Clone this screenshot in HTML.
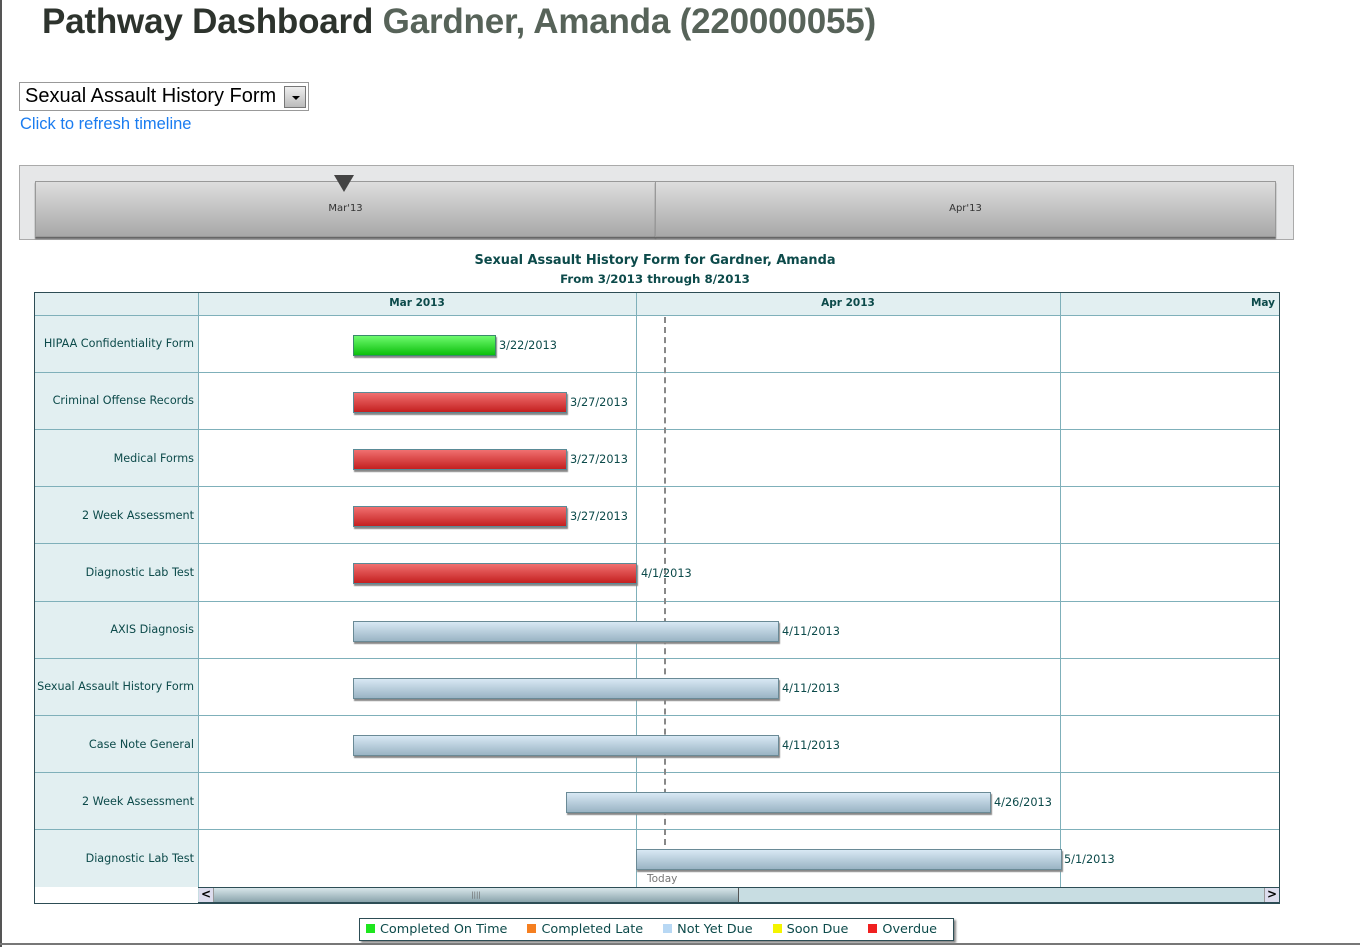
<!DOCTYPE html>
<html><head><meta charset="utf-8"><style>
*{margin:0;padding:0;box-sizing:border-box}
body{width:1360px;height:947px;background:#fff;position:relative;overflow:hidden;font-family:"Liberation Sans",sans-serif}
.a{position:absolute}
h1{position:absolute;left:42px;top:2px;font-size:35px;font-weight:bold;color:#2d332d;white-space:nowrap;letter-spacing:-0.2px}
h1 span{color:#576359}
.sel{left:19px;top:82px;width:290px;height:29px;border:1px solid #999;font-size:20px;padding:2px 0 0 5px;color:#000}
.sel .btn{position:absolute;right:2px;top:3px;width:22px;height:22px;border:1px solid #777;background:linear-gradient(#eee,#bbb)}
.sel .btn:after{content:"";position:absolute;left:7px;top:9px;border:4px solid transparent;border-top:4px solid #000}
.link{left:20px;top:115px;font-size:16.5px;color:#1a7cf0}
.tl{left:19px;top:165px;width:1275px;height:75px;background:#e6e7e8;border:1px solid #aaa}
.seg{top:15px;height:56px;background:linear-gradient(#dedede,#a8a8a8);border:1px solid #999;box-shadow:0 2px 1px #666;font-size:10px;font-family:"DejaVu Sans",sans-serif;color:#333;text-align:center;padding-top:21px}
.ct{width:1310px;text-align:center;font-weight:bold;color:#0c4a4a;font-size:12.9px;font-family:"DejaVu Sans",sans-serif}
.grid{left:34px;top:292px;width:1246px;height:612px;border:1px solid #2d4d55;font-family:"DejaVu Sans",sans-serif}
.cell{position:absolute;font-size:10.5px;color:#0c4a4a}
.hl{background:#e2eff1}
.vl{position:absolute;top:0;width:1px;background:#7fb0ba}
.hr{position:absolute;left:0;height:1px;background:#7fb0ba}
.bar{position:absolute;height:21px;border:1px solid #6a8a96;box-shadow:1px 2px 1px #888}
.g{background:linear-gradient(#6efa6e,#0cbf0c);border-color:#3a8a6a}
.r{background:linear-gradient(#f07070,#c42020);border-color:#5a8a96}
.b{background:linear-gradient(#d8e8f4,#9ab4c4)}
.d{position:absolute;font-size:11.3px;color:#0c4a4a}
.lab{position:absolute;right:0;width:163px;text-align:right;padding-right:4px;font-size:11.2px;color:#0c4a4a;white-space:nowrap}
.leg{left:359px;top:918px;width:595px;height:23px;border:1px solid #2d4d55;box-shadow:2px 2px 2px #888;font-size:12.8px;font-family:"DejaVu Sans",sans-serif;color:#0c4a4a;padding:3px 0 0 6px;white-space:nowrap}
.leg i{display:inline-block;width:9px;height:9px;margin-right:5px}
.leg b{font-weight:normal;margin-right:20px}
</style></head><body>
<div class="a" style="left:0;top:0;width:2px;height:947px;background:#555"></div>
<div class="a" style="left:0;top:943px;width:1360px;height:2px;background:#777"></div>
<h1>Pathway Dashboard <span>Gardner, Amanda (220000055)</span></h1>
<div class="a sel">Sexual Assault History Form<div class="btn"></div></div>
<div class="a link">Click to refresh timeline</div>
<div class="a tl">
<div class="a seg" style="left:15px;width:621px">Mar'13</div>
<div class="a seg" style="left:635px;width:621px">Apr'13</div>
<div class="a" style="left:314px;top:9px;border:10px solid transparent;border-top:17px solid #444;border-bottom:0"></div>
</div>
<div class="a ct" style="top:253px">Sexual Assault History Form for Gardner, Amanda</div>
<div class="a ct" style="top:272px;font-size:11.8px">From 3/2013 through 8/2013</div>
<div class="a grid">
<div class="a hl" style="left:0;top:0;width:1244px;height:23px"></div>
<div class="a hl" style="left:0;top:23px;width:163px;height:571px"></div>
<div class="cell" style="left:163px;top:4px;width:438px;text-align:center;font-weight:bold">Mar 2013</div>
<div class="cell" style="left:601px;top:4px;width:424px;text-align:center;font-weight:bold">Apr 2013</div>
<div class="cell" style="left:1180px;top:4px;width:60px;text-align:right;font-weight:bold">May</div>
<div class="vl" style="left:163px;height:594px"></div>
<div class="vl" style="left:601px;height:594px"></div>
<div class="vl" style="left:1025px;height:594px"></div>
<div class="hr" style="top:22px;width:1244px"></div>
<div class="hr" style="top:79px;width:1244px"></div>
<div class="hr" style="top:136px;width:1244px"></div>
<div class="hr" style="top:193px;width:1244px"></div>
<div class="hr" style="top:250px;width:1244px"></div>
<div class="hr" style="top:308px;width:1244px"></div>
<div class="hr" style="top:365px;width:1244px"></div>
<div class="hr" style="top:422px;width:1244px"></div>
<div class="hr" style="top:479px;width:1244px"></div>
<div class="hr" style="top:536px;width:1244px"></div>
<div class="a" style="left:629px;top:24px;height:528px;border-left:2px dashed #888"></div>
<div class="cell" style="left:612px;top:580px;color:#777">Today</div>
<div class="lab" style="left:0;top:44px">HIPAA Confidentiality Form</div>
<div class="lab" style="left:0;top:101px">Criminal Offense Records</div>
<div class="lab" style="left:0;top:159px">Medical Forms</div>
<div class="lab" style="left:0;top:216px">2 Week Assessment</div>
<div class="lab" style="left:0;top:273px">Diagnostic Lab Test</div>
<div class="lab" style="left:0;top:330px">AXIS Diagnosis</div>
<div class="lab" style="left:0;top:387px">Sexual Assault History Form</div>
<div class="lab" style="left:0;top:445px">Case Note General</div>
<div class="lab" style="left:0;top:502px">2 Week Assessment</div>
<div class="lab" style="left:0;top:559px">Diagnostic Lab Test</div>
<div class="bar g" style="left:318px;top:42px;width:143px"></div><div class="d" style="left:464px;top:46px">3/22/2013</div>
<div class="bar r" style="left:318px;top:99px;width:214px"></div><div class="d" style="left:535px;top:103px">3/27/2013</div>
<div class="bar r" style="left:318px;top:156px;width:214px"></div><div class="d" style="left:535px;top:160px">3/27/2013</div>
<div class="bar r" style="left:318px;top:213px;width:214px"></div><div class="d" style="left:535px;top:217px">3/27/2013</div>
<div class="bar r" style="left:318px;top:270px;width:284px"></div><div class="d" style="left:606px;top:274px">4/1/2013</div>
<div class="bar b" style="left:318px;top:328px;width:426px"></div><div class="d" style="left:747px;top:332px">4/11/2013</div>
<div class="bar b" style="left:318px;top:385px;width:426px"></div><div class="d" style="left:747px;top:389px">4/11/2013</div>
<div class="bar b" style="left:318px;top:442px;width:426px"></div><div class="d" style="left:747px;top:446px">4/11/2013</div>
<div class="bar b" style="left:531px;top:499px;width:425px"></div><div class="d" style="left:959px;top:503px">4/26/2013</div>
<div class="bar b" style="left:601px;top:556px;width:426px"></div><div class="d" style="left:1029px;top:560px">5/1/2013</div>
<div class="a" style="left:163px;top:594px;width:1081px;height:16px;background:#c8dde2;border-top:1px solid #2d4d55;border-bottom:1px solid #2d4d55"></div>
<div class="a" style="left:164px;top:595px;width:15px;height:14px;background:#dde;font-size:12px;line-height:13px;text-align:center;border-right:1px solid #999;font-weight:bold">&lt;</div>
<div class="a" style="left:179px;top:595px;width:525px;height:14px;background:linear-gradient(#d8e6ea,#8aa4ac);border-right:1px solid #555;font-size:7px;line-height:14px;text-align:center;color:#666">||||</div>
<div class="a" style="left:1229px;top:595px;width:15px;height:14px;background:#dde;font-size:12px;line-height:13px;text-align:center;border-left:1px solid #999;font-weight:bold">&gt;</div>
</div>
<div class="a leg"><i style="background:#1ee61e"></i><b>Completed On Time</b><i style="background:#f57f20"></i><b>Completed Late</b><i style="background:#b8d8f4"></i><b>Not Yet Due</b><i style="background:#f4f400"></i><b>Soon Due</b><i style="background:#f02020"></i>Overdue</div>
</body></html>
